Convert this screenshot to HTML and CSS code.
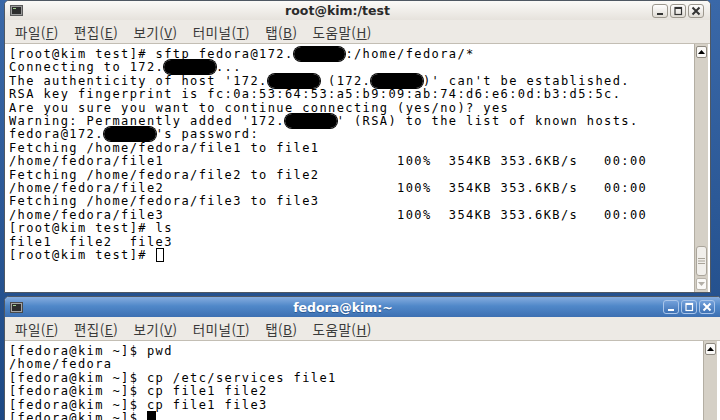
FILE: index.html
```html
<!DOCTYPE html>
<html lang="ko">
<head>
    <meta charset="UTF-8">
    <title>root@kim:/test</title>
    <link rel="stylesheet" href="styles.css">
</head>
<body>

<div class="window inactive top">
    <div class="titlebar">
        <svg class="winicon" width="13" height="11" viewBox="0 0 13 11">
            <rect x="0.5" y="0.5" width="12" height="10" fill="#9a9a9a" stroke="#5a5a5a"/>
            <rect x="2" y="2" width="9" height="7" fill="#2c2c2c"/>
            <rect x="3" y="3" width="3" height="1" fill="#9fd18c"/>
        </svg>
        <div class="title">root@kim:/test</div>
        <div class="buttons">
            <div class="btn">
                <svg width="10" height="10" viewBox="0 0 10 10"><rect x="2" y="7" width="6" height="2" fill="#333"/></svg>
            </div>
            <div class="btn">
                <svg width="10" height="10" viewBox="0 0 10 10"><rect x="2" y="1.5" width="6.5" height="7" fill="none" stroke="#333" stroke-width="1.2"/><rect x="2" y="1" width="7" height="2" fill="#333"/></svg>
            </div>
            <div class="btn">
                <svg width="10" height="10" viewBox="0 0 10 10"><path d="M1.5 1.5 L8.5 8.5 M8.5 1.5 L1.5 8.5" stroke="#333" stroke-width="2"/></svg>
            </div>
        </div>
    </div>
    <div class="menubar">
        <span>파일(<u>F</u>)</span>
        <span>편집(<u>E</u>)</span>
        <span>보기(<u>V</u>)</span>
        <span>터미널(<u>T</u>)</span>
        <span>탭(<u>B</u>)</span>
        <span>도움말(<u>H</u>)</span>
    </div>
    <div class="screen">
<pre class="term">
[root@kim test]# sftp fedora@172.<span class="mask">      </span>:/home/fedora/*
Connecting to 172.<span class="mask">      </span>...
The authenticity of host '172.<span class="mask">      </span> (172.<span class="mask">      </span>)' can't be established.
RSA key fingerprint is fc:0a:53:64:53:a5:b9:09:ab:74:d6:e6:0d:b3:d5:5c.
Are you sure you want to continue connecting (yes/no)? yes
Warning: Permanently added '172.<span class="mask">      </span>' (RSA) to the list of known hosts.
fedora@172.<span class="mask">      </span>'s password:
Fetching /home/fedora/file1 to file1
/home/fedora/file1                           100%  354KB 353.6KB/s   00:00
Fetching /home/fedora/file2 to file2
/home/fedora/file2                           100%  354KB 353.6KB/s   00:00
Fetching /home/fedora/file3 to file3
/home/fedora/file3                           100%  354KB 353.6KB/s   00:00
[root@kim test]# ls
file1  file2  file3
[root@kim test]# <span class="cursor hollow"> </span>
</pre>
        <div class="scroll">
            <div class="sb-btn up">
                <svg width="7" height="4" viewBox="0 0 7 4"><path d="M0 4 L3.5 0 L7 4 Z" fill="#000"/></svg>
            </div>
            <div class="sb-track"></div>
            <div class="sb-thumb">
                <svg width="7" height="6" viewBox="0 0 7 6"><path d="M0 0.5 H7 M0 3 H7 M0 5.5 H7" stroke="#a8a398" stroke-width="1"/></svg>
            </div>
            <div class="sb-btn down">
                <svg width="7" height="4" viewBox="0 0 7 4"><path d="M0 0 L3.5 4 L7 0 Z" fill="#b4b0a8"/></svg>
            </div>
        </div>
    </div>
</div>

<div class="window active bottom">
    <div class="titlebar">
        <svg class="winicon" width="13" height="11" viewBox="0 0 13 11">
            <rect x="0.5" y="0.5" width="12" height="10" fill="#a5a5a5" stroke="#4a4a4a"/>
            <rect x="2" y="2" width="9" height="7" fill="#2c2c2c"/>
            <rect x="3" y="3" width="3" height="1" fill="#9fd18c"/>
        </svg>
        <div class="title">fedora@kim:~</div>
        <div class="buttons">
            <div class="btn">
                <svg width="10" height="10" viewBox="0 0 10 10"><rect x="2" y="7" width="6" height="2" fill="#fff"/></svg>
            </div>
            <div class="btn">
                <svg width="10" height="10" viewBox="0 0 10 10"><rect x="2" y="1.5" width="6.5" height="7" fill="none" stroke="#fff" stroke-width="1.2"/><rect x="2" y="1" width="7" height="2" fill="#fff"/></svg>
            </div>
            <div class="btn">
                <svg width="10" height="10" viewBox="0 0 10 10"><path d="M1.5 1.5 L8.5 8.5 M8.5 1.5 L1.5 8.5" stroke="#fff" stroke-width="2"/></svg>
            </div>
        </div>
    </div>
    <div class="menubar">
        <span>파일(<u>F</u>)</span>
        <span>편집(<u>E</u>)</span>
        <span>보기(<u>V</u>)</span>
        <span>터미널(<u>T</u>)</span>
        <span>탭(<u>B</u>)</span>
        <span>도움말(<u>H</u>)</span>
    </div>
    <div class="screen">
<pre class="term">
[fedora@kim ~]$ pwd
/home/fedora
[fedora@kim ~]$ cp /etc/services file1
[fedora@kim ~]$ cp file1 file2
[fedora@kim ~]$ cp file1 file3
[fedora@kim ~]$ <span class="cursor"> </span>
</pre>
        <div class="scroll">
            <div class="sb-btn up">
                <svg width="7" height="4" viewBox="0 0 7 4"><path d="M0 4 L3.5 0 L7 4 Z" fill="#000"/></svg>
            </div>
            <div class="sb-track"></div>
        </div>
    </div>
</div>

</body>
</html>
```

FILE: styles.css
```css
/* 바탕화면 */
body {
    margin: 0;
    width: 720px;
    height: 420px;
    overflow: hidden;
    background: linear-gradient(#3a68a8, #1c4884);
    font-family: "DejaVu Sans", sans-serif;
}

.window {
    margin-left: 4px;
    display: flex;
    flex-direction: column;
    border: 1px solid #4f5863;
    border-radius: 5px 5px 0 0;
    background: #edeae5;
    overflow: hidden;
}

.top {
    width: 705px;
    height: 291px;
}

.bottom {
    width: 716px;
    height: 130px;
    margin-top: 3px;
}

/* 제목 표시줄 */
.titlebar {
    display: flex;
    align-items: center;
    height: 19px;
}

.top .titlebar {
    background: linear-gradient(#fbfaf8, #e6e2dc);
    color: #2a2a2a;
}

.bottom .titlebar {
    height: 20px;
    background: linear-gradient(#86addf, #5088c9 45%, #3d70b2);
    color: #fff;
}

.winicon {
    margin-left: 5px;
    flex-shrink: 0;
}

.title {
    flex: 1;
    text-align: center;
    font-weight: bold;
    font-size: 12.5px;
}

.bottom .title {
    text-shadow: 0 1px 0 #2c5890;
}

.buttons {
    display: flex;
    gap: 2px;
    margin-right: 6px;
}

.btn {
    width: 16px;
    height: 14px;
    box-sizing: border-box;
    border-radius: 3px;
    display: flex;
    align-items: center;
    justify-content: center;
}

.top .btn {
    border: 1px solid #9c978e;
    background: linear-gradient(#fefefe, #e0dcd5);
}

.bottom .btn {
    border: 1px solid #a9c5ea;
    background: linear-gradient(#72a0da, #3e72b5);
}

/* 메뉴 */
.menubar {
    display: flex;
    align-items: center;
    gap: 15px;
    height: 23px;
    padding-left: 10px;
    border-bottom: 1px solid #c3beb4;
    background: #edeae5;
    font-family: "Noto Sans CJK KR", sans-serif;
    font-size: 13.5px;
    letter-spacing: 0.5px;
    color: #3a3a3a;
}

.menubar u {
    text-underline-offset: 1px;
}

/* 터미널 화면 */
.screen {
    flex: 1;
    display: flex;
    min-height: 0;
    background: #fff;
}

.term {
    flex: 1;
    margin: 0;
    padding: 4px 0 0 4px;
    overflow: hidden;
    font-family: "DejaVu Sans Mono", monospace;
    font-size: 12px;
    letter-spacing: 1.4px;
    line-height: 13.4px;
    color: #000;
}

.mask {
    background: #000;
    border-radius: 7px;
    box-shadow: 0 0 0 1px #000;
}

.cursor {
    background: #000;
}

.cursor.hollow {
    background: none;
    box-shadow: inset 0 0 0 1px #000;
}

/* 스크롤바 */
.scroll {
    width: 14px;
    margin-right: 2px;
    display: flex;
    flex-direction: column;
    box-sizing: border-box;
    border-left: 1px solid #b3aea3;
    background: #d5d0c6;
}

.bottom .scroll {
    margin-right: 4px;
}

.sb-btn {
    height: 12px;
    margin: 2px 1px;
    box-sizing: border-box;
    border: 1px solid #8f8a81;
    border-radius: 2px;
    background: #fbfaf8;
    display: flex;
    align-items: center;
    justify-content: center;
}

.sb-btn.down {
    border-color: #b8b3aa;
}

.sb-track {
    flex: 1;
}

.sb-thumb {
    height: 30px;
    margin: 0 1px;
    box-sizing: border-box;
    border: 1px solid #aaa59b;
    border-radius: 3px;
    background: #f1efeb;
    display: flex;
    align-items: center;
    justify-content: center;
}
```
